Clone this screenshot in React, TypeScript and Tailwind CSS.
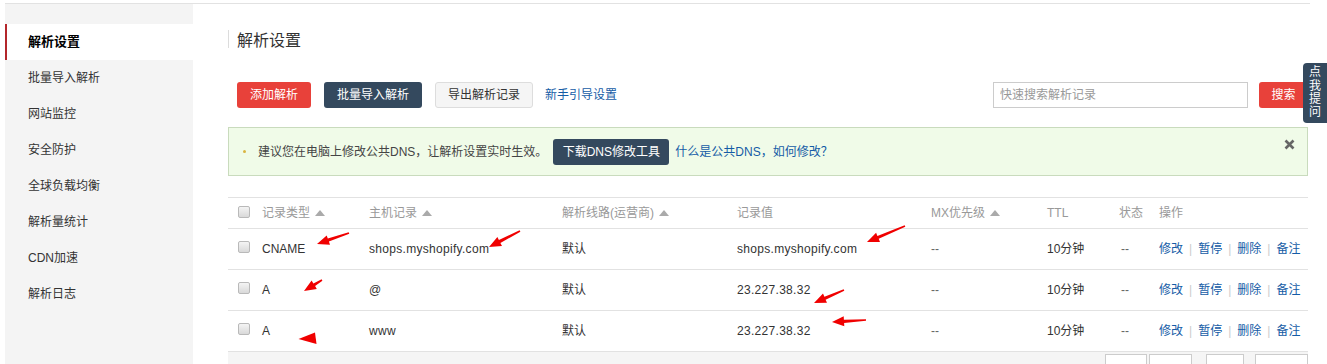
import React from "react";

const menu = ["解析设置", "批量导入解析", "网站监控", "安全防护", "全球负载均衡", "解析量统计", "CDN加速", "解析日志"];

const rows = [
  { type: "CNAME", host: "shops.myshopify.com", value: "shops.myshopify.com" },
  { type: "A", host: "@", value: "23.227.38.32" },
  { type: "A", host: "www", value: "23.227.38.32" },
];

const cols = "grid grid-cols-[34px_107px_193px_175px_194px_116px_72px_40px_1fr] items-center";

function Check() {
  return <span className="block w-[12px] h-[12px] rounded-[2px] border border-[#b9b9b9] bg-linear-to-b from-[#f4f4f4] to-[#d9d9d9]" />;
}

function Sort() {
  return (
    <svg width="10" height="6" viewBox="0 0 10 6" className="ml-[5px]">
      <polygon points="5,0 10,6 0,6" fill="#aaaaaa" />
    </svg>
  );
}

// red annotation arrows drawn on top of the screenshot
function arrowPoints(x1: number, y1: number, x2: number, y2: number) {
  const dx = x2 - x1;
  const dy = y2 - y1;
  const len = Math.hypot(dx, dy);
  const ux = dx / len;
  const uy = dy / len;
  const nx = -uy;
  const ny = ux;
  const head = Math.min(12, len * 0.6);
  const bx = x2 - ux * head;
  const by = y2 - uy * head;
  const p = (x: number, y: number) => `${x.toFixed(1)},${y.toFixed(1)}`;
  return [
    p(x1 + nx * 0.8, y1 + ny * 0.8),
    p(bx + nx * 1.6, by + ny * 1.6),
    p(bx + nx * 5, by + ny * 5),
    p(x2, y2),
    p(bx - nx * 5, by - ny * 5),
    p(bx - nx * 1.6, by - ny * 1.6),
    p(x1 - nx * 0.8, y1 - ny * 0.8),
  ].join(" ");
}

const arrows: [number, number, number, number][] = [
  [349, 233, 317, 244],
  [520, 231, 489, 247],
  [905, 226, 867, 242],
  [322, 280, 304, 291],
  [844, 290, 814, 303],
  [866, 320, 832, 322],
];

export default function App() {
  return (
    <div className="relative w-[1327px] h-[364px] overflow-hidden bg-white text-[12px] text-[#333] font-['Liberation_Sans','Noto_Sans_CJK_SC',sans-serif]">
      <div className="ml-[5px] mt-[3px] w-[1305px] h-[361px] border-t border-[#e2e2e2] flex">
        {/* sidebar */}
        <aside className="w-[188px] bg-[#f4f4f4] pt-[20px]">
          {menu.map((m, i) =>
            i === 0 ? (
              <div key={m} className="h-[36px] flex items-center bg-white border-l-2 border-[#b3262b] pl-[21px] text-[13px] font-bold text-black">
                {m}
              </div>
            ) : (
              <div key={m} className="h-[36px] flex items-center pl-[23px] text-[#333]">
                {m}
              </div>
            )
          )}
        </aside>

        {/* main */}
        <main className="flex-1 pl-[35px] pr-[2px]">
          <div className="mt-[26px] h-[18px] flex items-center border-l border-[#dcdcdc] pl-[8px] text-[16px] text-[#333] leading-[18px] pt-[3px]">
            解析设置
          </div>

          <div className="mt-[34px] h-[26px] flex items-center justify-between">
            <div className="flex items-center pl-[9px]">
              <button className="w-[74px] h-[26px] rounded-[3px] bg-[#e8413a] text-white">添加解析</button>
              <button className="ml-[13px] w-[98px] h-[26px] rounded-[3px] bg-[#34495e] text-white">批量导入解析</button>
              <button className="ml-[13px] w-[98px] h-[26px] rounded-[3px] bg-[#f5f5f5] border border-[#dddddd] text-[#333]">导出解析记录</button>
              <a className="ml-[12px] text-[#155ca6]">新手引导设置</a>
            </div>
            <div className="flex items-center">
              <input
                className="w-[255px] h-[26px] border border-[#cccccc] px-[6px] text-[12px] outline-none placeholder:text-[#999]"
                placeholder="快速搜索解析记录"
              />
              <button className="ml-[11px] w-[49px] h-[26px] rounded-[3px] bg-[#e8413a] text-white">搜索</button>
            </div>
          </div>

          <div className="mt-[19px] h-[49px] border border-[#c9dbbd] bg-[#f0fbe8] flex">
            <div className="flex-1 flex items-center pl-[14px]">
              <span className="w-[3px] h-[3px] rounded-full bg-[#d9b541]" />
              <span className="ml-[12px] text-[#444]">建议您在电脑上修改公共DNS，让解析设置实时生效。</span>
              <button className="ml-[6px] w-[116px] h-[26px] rounded-[3px] bg-[#34495e] text-white">下载DNS修改工具</button>
              <a className="ml-[6px] text-[#155ca6]">什么是公共DNS，如何修改？</a>
            </div>
            <svg width="11" height="11" viewBox="0 0 11 11" className="mt-[11px] mr-[12px]">
              <path d="M1.5 1.5 L9.5 9.5 M9.5 1.5 L1.5 9.5" stroke="#666" strokeWidth="2.6" />
            </svg>
          </div>

          <div className="mt-[21px] border-t border-[#e2e2e2]">
            <div className={`${cols} h-[31px] border-b border-[#e2e2e2] text-[#999]`}>
              <div className="pl-[10px] -mt-[3px]"><Check /></div>
              <div className="flex items-center">记录类型<Sort /></div>
              <div className="flex items-center">主机记录<Sort /></div>
              <div className="flex items-center">解析线路(运营商)<Sort /></div>
              <div>记录值</div>
              <div className="flex items-center">MX优先级<Sort /></div>
              <div>TTL</div>
              <div>状态</div>
              <div>操作</div>
            </div>
            {rows.map((r, i) => (
              <div key={i} className={`${cols} h-[41px] border-b border-[#e2e2e2] text-[#333]`}>
                <div className="pl-[10px] -mt-[4px]"><Check /></div>
                <div>{r.type}</div>
                <div className="tracking-[0.3px]">{r.host}</div>
                <div>默认</div>
                <div className="tracking-[0.3px]">{r.value}</div>
                <div className="text-[#666]">--</div>
                <div>10分钟</div>
                <div className="pl-[2px] text-[#666]">--</div>
                <div className="flex items-center text-[#155ca6]">
                  <span>修改</span>
                  <span className="mx-[6px] text-[#ccc]">|</span>
                  <span>暂停</span>
                  <span className="mx-[6px] text-[#ccc]">|</span>
                  <span>删除</span>
                  <span className="mx-[6px] text-[#ccc]">|</span>
                  <span>备注</span>
                </div>
              </div>
            ))}
            <div className="h-[30px] bg-[#f5f5f5] flex justify-end pt-[2px]">
              <span className="w-[42px] h-[24px] border border-[#cccccc] bg-white" />
              <span className="ml-[2px] w-[43px] h-[24px] border border-[#cccccc] bg-white" />
              <span className="ml-[14px] w-[38px] h-[24px] border border-[#cccccc] bg-white" />
              <span className="ml-[11px] w-[53px] h-[24px] border border-[#cccccc] bg-white" />
            </div>
          </div>
        </main>
      </div>

      {/* floating help tab */}
      <div className="absolute right-0 top-[63px] w-[24px] h-[60px] rounded-l-[4px] bg-[#34495e] text-white text-[12px] flex flex-col items-center justify-center">
        <span className="block h-[13.4px] leading-[13.4px]">点</span>
        <span className="block h-[13.4px] leading-[13.4px]">我</span>
        <span className="block h-[13.4px] leading-[13.4px]">提</span>
        <span className="block h-[13.4px] leading-[13.4px]">问</span>
      </div>

      {/* annotation arrows */}
      <svg className="absolute inset-0 pointer-events-none" width="1327" height="364">
        {arrows.map((a, i) => (
          <polygon key={i} points={arrowPoints(a[0], a[1], a[2], a[3])} fill="#f00000" />
        ))}
        <polygon points="298.5,339 315,332.5 316.5,344" fill="#f00000" />
      </svg>
    </div>
  );
}
